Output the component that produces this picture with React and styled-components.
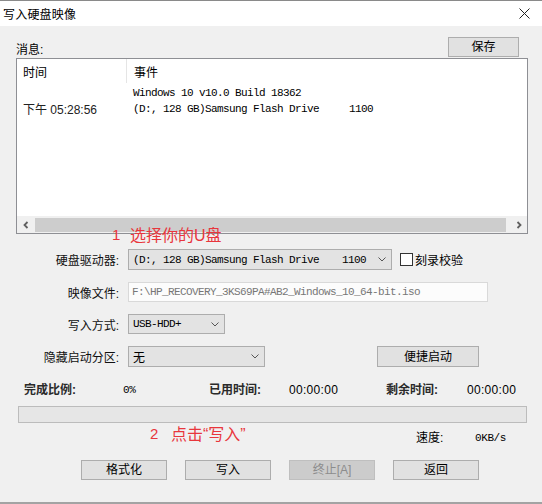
import React from 'react';
import styled, { createGlobalStyle } from 'styled-components';

const UI = `"Liberation Sans", "Noto Sans CJK SC", sans-serif`;
const MONO = `"Liberation Mono", "Noto Sans CJK SC", monospace`;

const GlobalStyle = createGlobalStyle`
  html, body {
    margin: 0;
    padding: 0;
    background: #f0f0f0;
  }
  * { box-sizing: border-box; }
`;

const Window = styled.div`
  width: 542px;
  height: 504px;
  display: flex;
  flex-direction: column;
  background: #f0f0f0;
  border-top: 1px solid #8a8a8a;
  border-bottom: 2px solid #a3a3a3;
  font-family: ${UI};
  font-size: 12px;
  color: #000;
`;

const TitleBar = styled.div`
  height: 25px;
  flex-shrink: 0;
  display: flex;
  align-items: center;
  justify-content: space-between;
  padding: 0 12px 0 3px;
  background: #fff;
  font-size: 12px;
  letter-spacing: 0.2px;
`;

const Body = styled.div`
  position: relative;
  flex: 1;
  display: flex;
  flex-direction: column;
  padding: 0 14px 0 16px;
`;

const TopRow = styled.div`
  margin-top: 11px;
  height: 20px;
  display: flex;
  align-items: flex-end;
  justify-content: space-between;
`;

const Label = styled.span`
  line-height: 14px;
  white-space: nowrap;
`;

const Button = styled.button`
  width: ${p => p.$w}px;
  height: ${p => p.$h || 20}px;
  margin: 0 ${p => p.$mr || 0}px 0 ${p => p.$ml || 0}px;
  padding: 0;
  background: ${p => (p.disabled ? '#cccccc' : '#e1e1e1')};
  border: 1px solid ${p => (p.disabled ? '#bfbfbf' : '#adadad')};
  color: ${p => (p.disabled ? '#8c8c8c' : '#000')};
  font-family: ${UI};
  font-size: 12px;
  line-height: 1;
  flex-shrink: 0;
`;

const ListBox = styled.div`
  margin-top: 1px;
  height: 176px;
  display: flex;
  flex-direction: column;
  background: #fff;
  border: 1px solid #8e8f94;
`;

const ListHeader = styled.div`
  height: 24px;
  display: grid;
  grid-template-columns: 110px 1fr;
  align-items: center;
`;

const HeaderCell = styled.div`
  height: 100%;
  display: flex;
  align-items: center;
  padding-left: ${p => p.$pl}px;
  border-right: ${p => (p.$sep ? '1px solid #e5e5e5' : 'none')};
`;

const ListRows = styled.div`
  flex: 1;
  padding-top: 2px;
`;

const ListRow = styled.div`
  height: 15px;
  display: grid;
  grid-template-columns: 110px 1fr;
  align-items: center;
`;

const TimeCell = styled.span`
  padding-left: 6px;
  white-space: nowrap;
  font-size: 12px;
  color: #222;
`;

const EventCell = styled.span`
  padding-left: 6px;
  white-space: pre;
  font-family: ${MONO};
  font-size: 11px;
  letter-spacing: -0.6px;
  color: #000;
`;

const ScrollBar = styled.div`
  height: 17px;
  display: flex;
  align-items: center;
  background: #f0f0f0;
`;

const ScrollArrow = styled.div`
  width: 17px;
  height: 17px;
  display: flex;
  align-items: center;
  justify-content: center;
  flex-shrink: 0;
`;

const ScrollThumb = styled.div`
  flex: 1;
  height: 14px;
  margin: 0 4px 0 1px;
  background: #cdcdcd;
`;

const Form = styled.div`
  margin-top: 15px;
  display: grid;
  grid-template-columns: 104px 1fr;
  column-gap: 8px;
  row-gap: 12px;
  align-items: center;
`;

const FormLabel = styled.div`
  text-align: right;
  padding-right: 1px;
  white-space: nowrap;
  color: #111;
`;

const Controls = styled.div`
  display: flex;
  align-items: center;
  height: ${p => p.$h}px;
`;

const Select = styled.div`
  width: ${p => p.$w}px;
  height: 100%;
  display: flex;
  align-items: center;
  padding: 0 5px 0 4px;
  background: #e3e3e3;
  border: 1px solid #adadad;
  font-family: ${p => (p.$cjk ? UI : MONO)};
  font-size: ${p => (p.$cjk ? 12 : 11)}px;
  letter-spacing: ${p => (p.$cjk ? 0 : -0.6)}px;
  color: #000;
`;

const SelectText = styled.span`
  flex: 1;
  white-space: pre;
  overflow: hidden;
`;

const SelectExtra = styled.span`
  margin-right: 12px;
`;

const TextInput = styled.div`
  width: ${p => p.$w}px;
  height: 100%;
  display: flex;
  align-items: center;
  padding-left: 3px;
  background: #fcfcfc;
  border: 1px solid #d9d9d9;
  color: #777;
  font-family: ${MONO};
  font-size: 11px;
  letter-spacing: -0.6px;
  white-space: pre;
`;

const Check = styled.span`
  width: 13px;
  height: 13px;
  margin: 0 2px 0 8px;
  background: #fff;
  border: 1px solid #333;
  flex-shrink: 0;
`;

const Stats = styled.div`
  margin-top: 16px;
  height: 14px;
  padding-left: 8px;
  display: grid;
  grid-template-columns: 99px 86px 80px 97px 81px auto;
  align-items: center;
  line-height: 14px;
`;

const StatLabel = styled.span`
  font-weight: 700;
  color: #2a2a2a;
`;

const StatValue = styled.span`
  font-family: ${p => (p.$mono ? MONO : UI)};
  font-size: ${p => (p.$mono ? 11 : 12)}px;
  letter-spacing: ${p => (p.$mono ? -0.4 : 0.3)}px;
  color: #000;
`;

const Progress = styled.div`
  margin: 9px 0 0 2px;
  width: 509px;
  height: 17px;
  background: #e6e6e6;
  border: 1px solid #bcbcbc;
`;

const SpeedRow = styled.div`
  margin-top: 8px;
  height: 14px;
  padding-left: 400px;
  display: grid;
  grid-template-columns: 59px auto;
  align-items: center;
  line-height: 14px;
`;

const ButtonRow = styled.div`
  margin: 15px 0 0 65px;
  display: flex;
  gap: 18px;
`;

const Annotation = styled.div`
  position: absolute;
  top: ${p => p.$top}px;
  left: ${p => p.$left}px;
  display: flex;
  align-items: center;
  color: #e8363c;
  font-family: ${UI};
  font-size: 16px;
  line-height: 18px;
  white-space: nowrap;
`;

const AnnoNum = styled.span`
  font-size: 15px;
  width: ${p => p.$w}px;
  margin-top: -3px;
`;

const Chevron = () => (
  <svg width="8" height="5" viewBox="0 0 8 5">
    <polyline points="0.5,0.5 4,4 7.5,0.5" fill="none" stroke="#555" strokeWidth="1" />
  </svg>
);

const ArrowIcon = ({ dir }) => (
  <svg width="6" height="8" viewBox="0 0 6 8">
    <polyline
      points={dir === 'left' ? '4.5,1 1.5,4 4.5,7' : '1.5,1 4.5,4 1.5,7'}
      fill="none"
      stroke="#606060"
      strokeWidth="1.8"
    />
  </svg>
);

const CloseIcon = () => (
  <svg width="11" height="11" viewBox="0 0 11 11">
    <path d="M0.5 0.5 L10.5 10.5 M10.5 0.5 L0.5 10.5" stroke="#222" strokeWidth="1" />
  </svg>
);

export default function App() {
  return (
    <Window>
      <GlobalStyle />
      <TitleBar>
        <span>写入硬盘映像</span>
        <CloseIcon />
      </TitleBar>
      <Body>
        <TopRow>
          <Label>消息:</Label>
          <Button $w={71} $mr={9}>保存</Button>
        </TopRow>

        <ListBox>
          <ListHeader>
            <HeaderCell $pl={6} $sep>时间</HeaderCell>
            <HeaderCell $pl={7}>事件</HeaderCell>
          </ListHeader>
          <ListRows>
            <ListRow>
              <TimeCell />
              <EventCell>Windows 10 v10.0 Build 18362</EventCell>
            </ListRow>
            <ListRow>
              <TimeCell>下午 05:28:56</TimeCell>
              <EventCell>{'(D:, 128 GB)Samsung Flash Drive     1100'}</EventCell>
            </ListRow>
          </ListRows>
          <ScrollBar>
            <ScrollArrow><ArrowIcon dir="left" /></ScrollArrow>
            <ScrollThumb />
            <ScrollArrow><ArrowIcon dir="right" /></ScrollArrow>
          </ScrollBar>
        </ListBox>

        <Form>
          <FormLabel>硬盘驱动器:</FormLabel>
          <Controls $h={21}>
            <Select $w={264}>
              <SelectText>(D:, 128 GB)Samsung Flash Drive</SelectText>
              <SelectExtra>1100</SelectExtra>
              <Chevron />
            </Select>
            <Check />
            <span>刻录校验</span>
          </Controls>

          <FormLabel>映像文件:</FormLabel>
          <Controls $h={20}>
            <TextInput $w={360}>F:\HP_RECOVERY_3KS69PA#AB2_Windows_10_64-bit.iso</TextInput>
          </Controls>

          <FormLabel>写入方式:</FormLabel>
          <Controls $h={20}>
            <Select $w={97}>
              <SelectText>USB-HDD+</SelectText>
              <Chevron />
            </Select>
          </Controls>

          <FormLabel>隐藏启动分区:</FormLabel>
          <Controls $h={21}>
            <Select $w={137} $cjk>
              <SelectText>无</SelectText>
              <Chevron />
            </Select>
            <Button $w={102} $h={21} $ml={112}>便捷启动</Button>
          </Controls>
        </Form>

        <Stats>
          <StatLabel>完成比例:</StatLabel>
          <StatValue $mono>0%</StatValue>
          <StatLabel>已用时间:</StatLabel>
          <StatValue>00:00:00</StatValue>
          <StatLabel>剩余时间:</StatLabel>
          <StatValue>00:00:00</StatValue>
        </Stats>

        <Progress />

        <SpeedRow>
          <span>速度:</span>
          <StatValue $mono>0KB/s</StatValue>
        </SpeedRow>

        <ButtonRow>
          <Button $w={86}>格式化</Button>
          <Button $w={86}>写入</Button>
          <Button $w={86} disabled>终止[A]</Button>
          <Button $w={86}>返回</Button>
        </ButtonRow>

        <Annotation $top={201} $left={112}>
          <AnnoNum $w={18}>1</AnnoNum>
          <span>选择你的U盘</span>
        </Annotation>
        <Annotation $top={400} $left={150}>
          <AnnoNum $w={21}>2</AnnoNum>
          <span>点击“写入”</span>
        </Annotation>
      </Body>
    </Window>
  );
}
